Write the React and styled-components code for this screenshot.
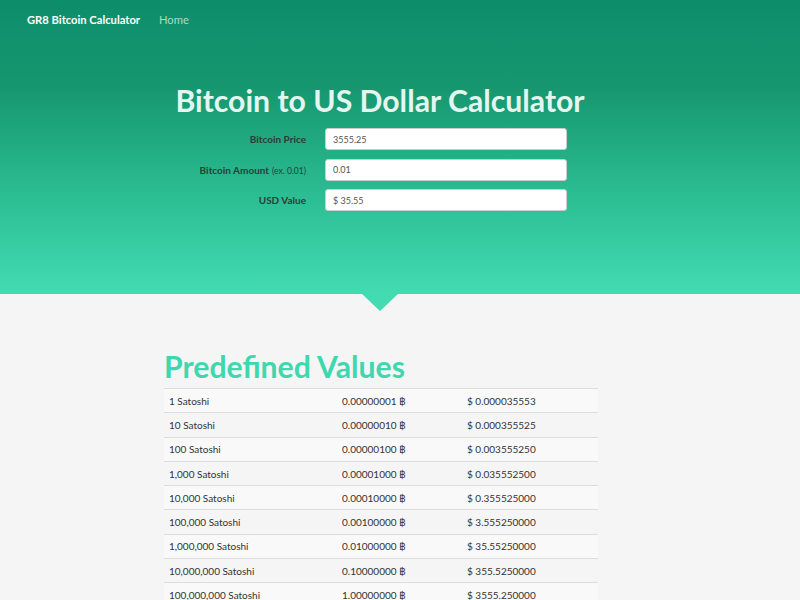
import React from "react";
import styled, { createGlobalStyle } from "styled-components";

const Global = createGlobalStyle`
  html, body { margin: 0; padding: 0; background: #f5f5f5; }
  body { font-family: Lato, "Open Sans", sans-serif; color: #333; }
  * { box-sizing: border-box; }
`;

const Header = styled.header`
  position: relative;
  height: 294px;
  background: linear-gradient(to bottom, #0e8d6b 0%, #16976f 30%, #2bbc91 65%, #43dbb2 100%);
`;

const Nav = styled.nav`
  display: flex;
  align-items: center;
  height: 38px;
  padding: 0 27px;
  gap: 19px;
`;

const Brand = styled.a`
  color: #fff;
  font-weight: 700;
  font-size: 11.2px;
`;

const NavLink = styled.a`
  color: #a9dcc6;
  font-size: 11.2px;
`;

const Hero = styled.div`
  display: flex;
  flex-direction: column;
  align-items: center;
  padding-top: 44px;
  padding-right: 40px;
`;

const Title = styled.h1`
  margin: 0 0 10px 0;
  font-size: 30.2px;
  font-weight: 700;
  color: #e4f6ef;
  line-height: 36px;
`;

const Form = styled.div`
  display: grid;
  grid-template-columns: 306px 242px;
  column-gap: 19px;
  row-gap: 8.5px;
  width: 567px;
  align-self: flex-start;
`;

const Label = styled.label`
  display: block;
  text-align: right;
  font-size: 10px;
  font-weight: 700;
  color: #2f3b36;
  height: 22px;
  line-height: 22px;
`;

const Small = styled.small`
  font-size: 8.5px;
  font-weight: 400;
  margin-left: 3px;
`;

const Input = styled.input`
  height: 22px;
  border: 1px solid #ccc;
  border-radius: 3px;
  background: #fff;
  font-family: Lato, sans-serif;
  font-size: 9px;
  color: #555;
  padding: 0 7px;
  outline: none;
`;

const Arrow = styled.div`
  position: absolute;
  left: 362px;
  bottom: -17px;
  width: 0;
  height: 0;
  border-left: 18px solid transparent;
  border-right: 18px solid transparent;
  border-top: 17px solid #43dbb2;
`;

const Main = styled.main`
  width: 434px;
  margin: 0 0 0 164px;
  padding-top: 53px;
`;

const Heading = styled.h2`
  margin: 0 0 3px 0;
  font-size: 30.2px;
  font-weight: 700;
  color: #3fd8ae;
  line-height: 38px;
`;

const Table = styled.table`
  width: 100%;
  border-collapse: collapse;
  font-size: 10px;
  color: #333;
`;

const Row = styled.tr`
  background: ${(p) => (p.$odd ? "#f9f9f9" : "transparent")};
`;

const Cell = styled.td`
  border-top: 1px solid #ddd;
  height: 24.3px;
  padding: 0 0 0 5px;
  vertical-align: middle;
  width: ${(p) => p.$w || "auto"};
`;

const rows = [
  ["1 Satoshi", "0.00000001 ฿", "$ 0.000035553"],
  ["10 Satoshi", "0.00000010 ฿", "$ 0.000355525"],
  ["100 Satoshi", "0.00000100 ฿", "$ 0.003555250"],
  ["1,000 Satoshi", "0.00001000 ฿", "$ 0.035552500"],
  ["10,000 Satoshi", "0.00010000 ฿", "$ 0.355525000"],
  ["100,000 Satoshi", "0.00100000 ฿", "$ 3.555250000"],
  ["1,000,000 Satoshi", "0.01000000 ฿", "$ 35.55250000"],
  ["10,000,000 Satoshi", "0.10000000 ฿", "$ 355.5250000"],
  ["100,000,000 Satoshi", "1.00000000 ฿", "$ 3555.250000"],
];

export default function App() {
  return (
    <>
      <Global />
      <Header>
        <Nav>
          <Brand>GR8 Bitcoin Calculator</Brand>
          <NavLink>Home</NavLink>
        </Nav>
        <Hero>
          <Title>Bitcoin to US Dollar Calculator</Title>
          <Form>
            <Label>Bitcoin Price</Label>
            <Input defaultValue="3555.25" />
            <Label>
              Bitcoin Amount<Small>(ex. 0.01)</Small>
            </Label>
            <Input defaultValue="0.01" />
            <Label>USD Value</Label>
            <Input defaultValue="$ 35.55" />
          </Form>
        </Hero>
        <Arrow />
      </Header>
      <Main>
        <Heading>Predefined Values</Heading>
        <Table>
          <tbody>
            {rows.map((r, i) => (
              <Row key={i} $odd={i % 2 === 0}>
                <Cell $w="173px">{r[0]}</Cell>
                <Cell $w="125px">{r[1]}</Cell>
                <Cell>{r[2]}</Cell>
              </Row>
            ))}
          </tbody>
        </Table>
      </Main>
    </>
  );
}
